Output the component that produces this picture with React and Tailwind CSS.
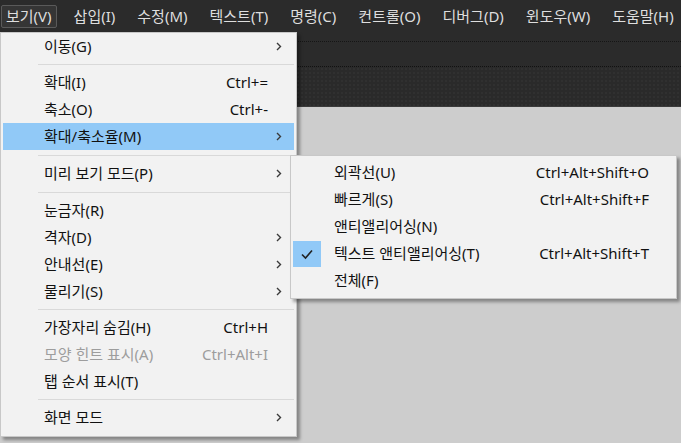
const font = { fontFamily: '"Noto Sans", "Noto Sans CJK KR", sans-serif' };

const Chevron = () => (
  <svg width="6" height="9" viewBox="0 0 6 9" className="text-[#3a3a3a]">
    <polyline points="1,1 4.5,4.5 1,8" fill="none" stroke="currentColor" strokeWidth="1.4" />
  </svg>
);

const Check = () => (
  <svg width="14" height="12" viewBox="0 0 14 12">
    <polyline points="2,6.5 5.5,10 12,2.5" fill="none" stroke="#222" strokeWidth="1.6" />
  </svg>
);

const Sep = ({ h }) => (
  <div className={`flex items-center pl-[37px] pr-[2px] ${h}`}>
    <div className="h-px w-full bg-[#d9d9d9]" />
  </div>
);

const Row = ({ label, shortcut, arrow, active, disabled }) => (
  <div
    className={`mx-[2px] flex h-[27px] items-center pl-[41px] pr-[12px] ${active ? 'bg-[#91c9f7]' : ''} ${
      disabled ? 'text-[#9d9d9d]' : 'text-[#111]'
    }`}
  >
    <span className="flex-1 whitespace-nowrap">{label}</span>
    {shortcut && <span className="whitespace-nowrap">{shortcut}</span>}
    <span className="ml-[8px] flex w-[6px] justify-end">{arrow && <Chevron />}</span>
  </div>
);

const SubRow = ({ label, shortcut, checked }) => (
  <div className="flex h-[27px] items-center pr-[27px] text-[#111]">
    <div className="ml-[2px] flex h-[26px] w-[28px] items-center justify-center">
      {checked && (
        <div className="flex h-[26px] w-[28px] items-center justify-center bg-[#91c9f7]">
          <Check />
        </div>
      )}
    </div>
    <span className="ml-[13px] flex-1 whitespace-nowrap">{label}</span>
    {shortcut && <span className="whitespace-nowrap">{shortcut}</span>}
  </div>
);

const menus = ['보기(V)', '삽입(I)', '수정(M)', '텍스트(T)', '명령(C)', '컨트롤(O)', '디버그(D)', '윈도우(W)', '도움말(H)'];

export default function App() {
  return (
    <div className="relative h-[443px] w-[681px] overflow-hidden bg-[#cdcdcd] text-[15px]" style={font}>
      {/* menu bar */}
      <div className="flex h-[32px] items-center gap-[12px] bg-[#2b2b2b] pl-[1px] text-[#dedede]">
        {menus.map((m, i) => (
          <div
            key={m}
            className={`flex h-[23px] items-center rounded-[2px] px-[4px] ${
              i === 0 ? 'border border-[#5a5a5a] bg-[#353535]' : 'border border-transparent'
            }`}
          >
            {m}
          </div>
        ))}
      </div>
      {/* toolbars */}
      <div className="h-[35px] border-b border-dotted border-[#111] bg-[#2b2b2b] pt-[9px]">
        <div className="border-t border-dotted border-[#151515]" />
      </div>
      <div
        className="h-[40px] border-b border-[#3a3a3a] bg-[#2a2a2a]"
        style={{ backgroundImage: 'radial-gradient(#363636 0.6px, transparent 0.8px)', backgroundSize: '4px 4px' }}
      />

      {/* main dropdown */}
      <div className="absolute left-0 top-[32px] w-[297px] border border-[#c8c8c8] bg-[#f2f2f2] pb-[5px] shadow-[3px_3px_3px_rgba(0,0,0,0.35)]">
        <Row label="이동(G)" arrow />
        <Sep h="h-[9px]" />
        <Row label="확대(I)" shortcut="Ctrl+=" />
        <Row label="축소(O)" shortcut="Ctrl+-" />
        <Row label="확대/축소율(M)" arrow active />
        <Sep h="h-[10px]" />
        <Row label="미리 보기 모드(P)" arrow />
        <Sep h="h-[10px]" />
        <Row label="눈금자(R)" />
        <Row label="격자(D)" arrow />
        <Row label="안내선(E)" arrow />
        <Row label="물리기(S)" arrow />
        <Sep h="h-[9px]" />
        <Row label="가장자리 숨김(H)" shortcut="Ctrl+H" />
        <Row label="모양 힌트 표시(A)" shortcut="Ctrl+Alt+I" disabled />
        <Row label="탭 순서 표시(T)" />
        <Sep h="h-[9px]" />
        <Row label="화면 모드" arrow />
      </div>

      {/* submenu */}
      <div className="absolute left-[290px] top-[155px] w-[387px] border border-[#c8c8c8] bg-[#f2f2f2] pb-[4px] pt-[3px] shadow-[3px_3px_3px_rgba(0,0,0,0.35)]">
        <SubRow label="외곽선(U)" shortcut="Ctrl+Alt+Shift+O" />
        <SubRow label="빠르게(S)" shortcut="Ctrl+Alt+Shift+F" />
        <SubRow label="앤티앨리어싱(N)" />
        <SubRow label="텍스트 앤티앨리어싱(T)" shortcut="Ctrl+Alt+Shift+T" checked />
        <SubRow label="전체(F)" />
      </div>
    </div>
  );
}
